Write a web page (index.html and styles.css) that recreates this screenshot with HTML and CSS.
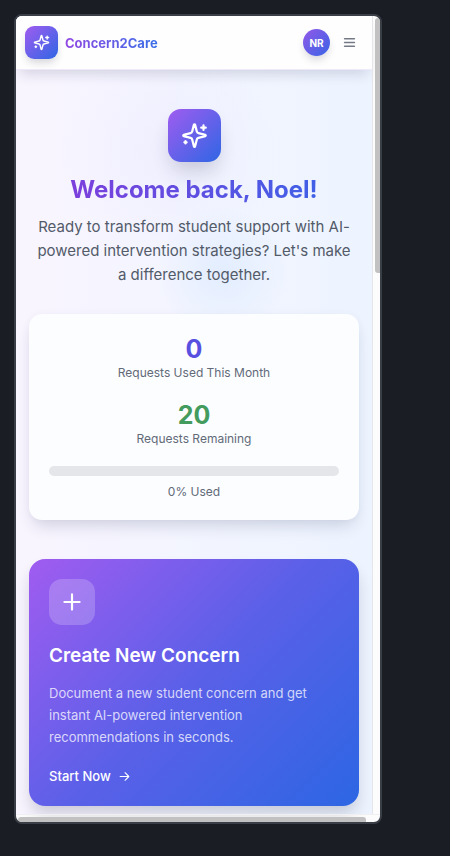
FILE: index.html
```html
<!DOCTYPE html>
<html lang="en">
<head>
<meta charset="utf-8">
<meta name="viewport" content="width=device-width, initial-scale=1">
<title>Concern2Care</title>
<link rel="stylesheet" href="styles.css">
</head>
<body>
<div class="device">
  <div class="screen">
    <header class="topbar">
      <a class="brand" href="#">
        <span class="brand-mark">
          <svg class="icon icon-brand" viewBox="0 0 24 24" aria-hidden="true"><path d="M9.94 15.5A2 2 0 0 0 8.5 14.06l-6.14-1.58a.5.5 0 0 1 0-.96L8.5 9.94A2 2 0 0 0 9.94 8.5l1.58-6.14a.5.5 0 0 1 .96 0l1.58 6.14a2 2 0 0 0 1.44 1.44l6.14 1.58a.5.5 0 0 1 0 .96l-6.14 1.58a2 2 0 0 0-1.44 1.44l-1.58 6.14a.5.5 0 0 1-.96 0z"/><path d="M20 3v4M22 5h-4M4 17v2M5 18H3"/></svg>
        </span>
        <span class="brand-name">Concern2Care</span>
      </a>
      <div class="actions">
        <button class="avatar" type="button" title="Account">NR</button>
        <button class="menu" type="button" aria-label="Menu">
          <svg class="icon icon-menu" viewBox="0 0 24 24" aria-hidden="true"><path d="M3 5h18M3 12h18M3 19h18"/></svg>
        </button>
      </div>
    </header>
    <main class="content">
      <section class="hero">
        <div class="hero-mark">
          <svg class="icon icon-hero" viewBox="0 0 24 24" aria-hidden="true"><path d="M9.94 15.5A2 2 0 0 0 8.5 14.06l-6.14-1.58a.5.5 0 0 1 0-.96L8.5 9.94A2 2 0 0 0 9.94 8.5l1.58-6.14a.5.5 0 0 1 .96 0l1.58 6.14a2 2 0 0 0 1.44 1.44l6.14 1.58a.5.5 0 0 1 0 .96l-6.14 1.58a2 2 0 0 0-1.44 1.44l-1.58 6.14a.5.5 0 0 1-.96 0z"/><path d="M20 3v4M22 5h-4M4 17v2M5 18H3"/></svg>
        </div>
        <h1 class="hero-title">Welcome back, Noel!</h1>
        <p class="hero-text">Ready to transform student support with AI-powered intervention strategies? Let's make a difference together.</p>
      </section>
      <section class="usage">
        <div class="stat">
          <strong class="stat-value used">0</strong>
          <span class="stat-label">Requests Used This Month</span>
        </div>
        <div class="stat">
          <strong class="stat-value remaining">20</strong>
          <span class="stat-label">Requests Remaining</span>
        </div>
        <div class="quota">
          <div class="track" role="progressbar" aria-label="Requests used" aria-valuemin="0" aria-valuemax="100" aria-valuenow="0"></div>
          <span class="stat-label">0% Used</span>
        </div>
      </section>
      <a class="create" href="#">
        <span class="create-mark">
          <svg class="icon icon-plus" viewBox="0 0 24 24" aria-hidden="true"><path d="M5 12h14M12 5v14"/></svg>
        </span>
        <h2 class="create-title">Create New Concern</h2>
        <p class="create-text">Document a new student concern and get instant AI-powered intervention recommendations in seconds.</p>
        <span class="create-action">Start Now
          <svg class="icon icon-arrow" viewBox="0 0 24 24" aria-hidden="true"><path d="M4 12h16M13 5l7 7-7 7"/></svg>
        </span>
      </a>
    </main>
  </div>
  <div class="scroll-y"><div class="thumb-y"></div></div>
  <div class="scroll-x"><div class="thumb-x"></div></div>
</div>
</body>
</html>
```
FILE: styles.css
```css
* {
  box-sizing: border-box;
}

body {
  margin: 0;
  padding: 14px 68px 32px 14px;
  background: #1a1d24;
  font-family: Inter, "Liberation Sans", sans-serif;
  color: #535b69;
}

h1, h2, p {
  margin: 0;
}

a {
  color: inherit;
  text-decoration: none;
}

button {
  border: 0;
  padding: 0;
  font: inherit;
  cursor: pointer;
}

.icon {
  display: block;
  fill: none;
  stroke: currentColor;
  stroke-width: 2;
  stroke-linecap: round;
  stroke-linejoin: round;
}

.device {
  display: grid;
  grid-template-columns: 1fr 8px;
  grid-template-rows: auto 8px;
  border: 2px solid #3a3e47;
  border-radius: 8px;
  overflow: hidden;
  background: #fcfcfc;
}

.screen {
  background:
    radial-gradient(circle at 58% 32%, rgba(191, 219, 254, 0.3), rgba(191, 219, 254, 0) 66px),
    radial-gradient(circle at 42% 17%, rgba(221, 214, 254, 0.2), rgba(221, 214, 254, 0) 110px),
    linear-gradient(to right, #f9f5ff, #f2f5ff 55%, #edf4ff);
}

.topbar {
  display: flex;
  align-items: center;
  justify-content: space-between;
  height: 54px;
  padding: 0 16px 0 9px;
  background: #fefefe;
  border-bottom: 1px solid #efe9fa;
  box-shadow: 0 8px 12px -4px rgba(30, 30, 70, 0.16);
}

.brand {
  display: flex;
  align-items: center;
  gap: 7px;
}

.brand-mark,
.hero-mark {
  display: grid;
  place-items: center;
  color: #fff;
  background: linear-gradient(135deg, #a05cf0, #2f66e4);
}

.brand-mark {
  width: 33px;
  height: 33px;
  border-radius: 9px;
  box-shadow: 0 5px 8px -2px rgba(30, 30, 60, 0.2);
}

.icon-brand {
  width: 17px;
  height: 17px;
}

.brand-name {
  font-size: 13px;
  font-weight: 700;
  line-height: 20px;
  color: transparent;
  background: linear-gradient(to right, #9148e3, #386fe8);
  -webkit-background-clip: text;
  background-clip: text;
}

.actions {
  display: flex;
  align-items: center;
  gap: 12px;
}

.avatar {
  width: 27px;
  height: 27px;
  border-radius: 50%;
  font-size: 10px;
  font-weight: 700;
  color: #fff;
  background: linear-gradient(135deg, #9358e8, #3864e6);
  box-shadow: 0 5px 8px -2px rgba(30, 30, 60, 0.2);
}

.menu {
  display: grid;
  place-items: center;
  width: 14px;
  height: 27px;
  color: #747985;
  background: none;
}

.icon-menu {
  width: 13px;
  height: 13px;
  stroke-width: 3;
}

.content {
  display: flex;
  flex-direction: column;
  padding: 39px 13px 8px;
}

.hero {
  display: flex;
  flex-direction: column;
  align-items: center;
  text-align: center;
}

.hero-mark {
  width: 53px;
  height: 53px;
  border-radius: 13px;
  box-shadow: 0 12px 20px -4px rgba(30, 30, 60, 0.2);
}

.icon-hero {
  width: 27px;
  height: 27px;
}

.hero-title {
  margin-top: 13px;
  font-size: 24px;
  font-weight: 700;
  line-height: 30px;
  color: transparent;
  background: linear-gradient(to right, #7c3fdc, #4060e6);
  -webkit-background-clip: text;
  background-clip: text;
}

.hero-text {
  margin-top: 10px;
  padding: 0 6px;
  font-size: 15px;
  line-height: 24px;
}

.usage {
  display: flex;
  flex-direction: column;
  gap: 19px;
  margin-top: 27px;
  padding: 20px;
  border-radius: 13px;
  background: #fcfdff;
  text-align: center;
  box-shadow: 0 10px 16px -4px rgba(30, 40, 80, 0.16), 0 0 8px rgba(30, 40, 80, 0.04);
}

.stat {
  display: flex;
  flex-direction: column;
}

.stat-value {
  font-size: 25px;
  font-weight: 700;
  line-height: 30px;
}

.used {
  color: #5850e0;
}

.remaining {
  color: #449b5e;
}

.stat-label {
  font-size: 12px;
  line-height: 17px;
  color: #626a78;
}

.quota {
  display: flex;
  flex-direction: column;
  gap: 7px;
}

.track {
  height: 10px;
  border-radius: 5px;
  background: #e5e6e9;
}

.create {
  display: flex;
  flex-direction: column;
  align-items: flex-start;
  margin-top: 39px;
  padding: 20px;
  border-radius: 16px;
  color: #fff;
  background: linear-gradient(135deg, #a05cf0, #5a60e8 50%, #2c66e3);
  box-shadow: 0 10px 16px -2px rgba(30, 30, 60, 0.2);
}

.create-mark {
  display: grid;
  place-items: center;
  width: 46px;
  height: 46px;
  border-radius: 13px;
  background: rgba(255, 255, 255, 0.2);
}

.icon-plus {
  width: 26px;
  height: 26px;
}

.create-title {
  margin-top: 18px;
  font-size: 19px;
  font-weight: 600;
  line-height: 26px;
}

.create-text {
  margin-top: 13px;
  font-size: 13px;
  line-height: 22px;
  color: rgba(255, 255, 255, 0.76);
}

.create-action {
  display: flex;
  align-items: center;
  gap: 7px;
  margin-top: 18px;
  font-size: 13px;
  font-weight: 500;
  line-height: 20px;
}

.icon-arrow {
  width: 13px;
  height: 13px;
}

.scroll-y {
  padding: 2px 0 0 2px;
  border-left: 1px solid #e4e6ea;
}

.thumb-y {
  height: 32%;
  border-radius: 3px 0 0 3px;
  background: #c1c1c1;
}

.scroll-x {
  grid-column: 1 / -1;
  padding: 2px 14px 0 2px;
  border-top: 1px solid #f0f0f2;
}

.thumb-x {
  height: 5px;
  border-radius: 3px 3px 0 0;
  background: #c1c1c1;
}
```
